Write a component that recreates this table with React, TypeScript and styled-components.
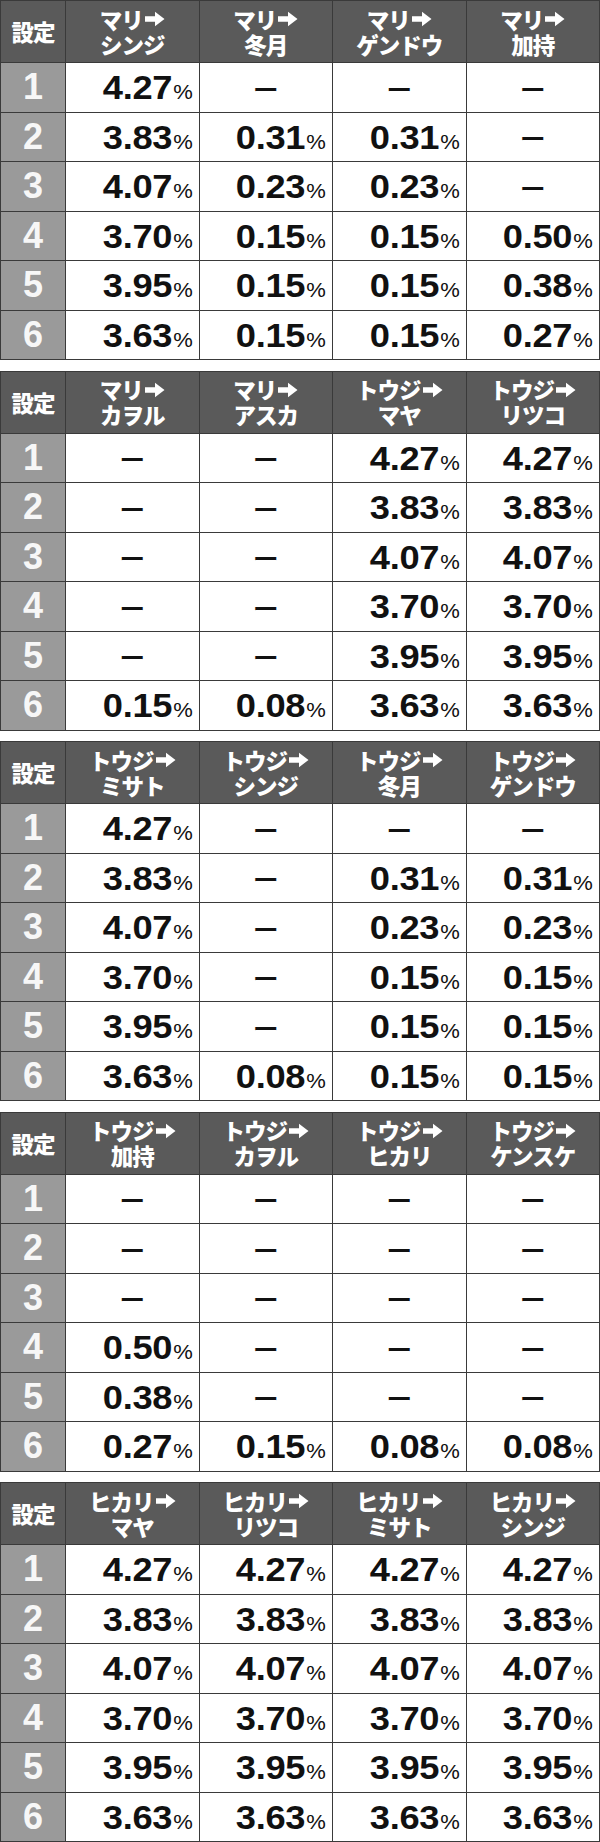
import React from "react";
import styled, { createGlobalStyle } from "styled-components";

const GlobalStyle = createGlobalStyle`
  html, body { margin: 0; padding: 0; background: #ffffff; }
  #root { width: 600px; }
`;

const Page = styled.div`
  width: 600px;
  display: flex;
  flex-direction: column;
  gap: 10.5px;
  background: #ffffff;
`;

const Table = styled.div`
  box-sizing: border-box;
  width: 600px;
  height: 360px;
  display: grid;
  grid-template-columns: 64px repeat(4, 1fr);
  grid-template-rows: 61px repeat(6, 1fr);
  gap: 1px;
  background: #3a3a3a;
  border: 1px solid #3a3a3a;
`;

const HeadCell = styled.div`
  background: #5a5a5a;
  color: #ffffff;
  display: flex;
  flex-direction: column;
  align-items: center;
  justify-content: center;
  font-family: "Noto Sans CJK JP", sans-serif;
  font-weight: 900;
  font-size: 22.5px;
  line-height: 25px;
  letter-spacing: -1px;
  white-space: nowrap;
`;

const HeadLine = styled.div`
  display: flex;
  align-items: center;
  height: 25px;
`;

const ArrowSvg = styled.svg`
  width: 21px;
  height: 16px;
  margin-left: 1px;
  flex: none;
`;

const SetCell = styled.div`
  background: #9a9a9a;
  color: #f7f7f7;
  display: flex;
  align-items: center;
  justify-content: center;
  font-family: "Liberation Sans", Arial, sans-serif;
  font-weight: 700;
  font-size: 36px;
`;

const DataCell = styled.div<{ $dash?: boolean }>`
  background: #ffffff;
  display: flex;
  align-items: center;
  justify-content: ${(p) => (p.$dash ? "center" : "flex-end")};
  padding-right: ${(p) => (p.$dash ? "0" : "6px")};
  color: #111111;
`;

const Value = styled.span`
  display: inline-block;
  transform: scaleX(1.1);
  transform-origin: right center;
  white-space: nowrap;
  font-family: "Liberation Sans", Arial, sans-serif;
  line-height: 1;
  margin-top: 1px;
`;

const Num = styled.span`
  font-weight: 700;
  font-size: 33px;
  letter-spacing: -0.3px;
`;

const Pct = styled.span`
  font-weight: 400;
  font-size: 20px;
  margin-left: 1px;
`;

const DashBar = styled.span`
  font-family: "Noto Sans CJK JP", sans-serif;
  font-weight: 500;
  font-size: 26px;
  line-height: 1;
  margin-top: 3px;
`;

type TableData = {
  heads: [string, string][];
  rows: (string | null)[][];
};

const all = ["4.27", "3.83", "4.07", "3.70", "3.95", "3.63"];

const tables: TableData[] = [
  {
    heads: [
      ["マリ", "シンジ"],
      ["マリ", "冬月"],
      ["マリ", "ゲンドウ"],
      ["マリ", "加持"],
    ],
    rows: [
      ["4.27", null, null, null],
      ["3.83", "0.31", "0.31", null],
      ["4.07", "0.23", "0.23", null],
      ["3.70", "0.15", "0.15", "0.50"],
      ["3.95", "0.15", "0.15", "0.38"],
      ["3.63", "0.15", "0.15", "0.27"],
    ],
  },
  {
    heads: [
      ["マリ", "カヲル"],
      ["マリ", "アスカ"],
      ["トウジ", "マヤ"],
      ["トウジ", "リツコ"],
    ],
    rows: [
      [null, null, "4.27", "4.27"],
      [null, null, "3.83", "3.83"],
      [null, null, "4.07", "4.07"],
      [null, null, "3.70", "3.70"],
      [null, null, "3.95", "3.95"],
      ["0.15", "0.08", "3.63", "3.63"],
    ],
  },
  {
    heads: [
      ["トウジ", "ミサト"],
      ["トウジ", "シンジ"],
      ["トウジ", "冬月"],
      ["トウジ", "ゲンドウ"],
    ],
    rows: [
      ["4.27", null, null, null],
      ["3.83", null, "0.31", "0.31"],
      ["4.07", null, "0.23", "0.23"],
      ["3.70", null, "0.15", "0.15"],
      ["3.95", null, "0.15", "0.15"],
      ["3.63", "0.08", "0.15", "0.15"],
    ],
  },
  {
    heads: [
      ["トウジ", "加持"],
      ["トウジ", "カヲル"],
      ["トウジ", "ヒカリ"],
      ["トウジ", "ケンスケ"],
    ],
    rows: [
      [null, null, null, null],
      [null, null, null, null],
      [null, null, null, null],
      ["0.50", null, null, null],
      ["0.38", null, null, null],
      ["0.27", "0.15", "0.08", "0.08"],
    ],
  },
  {
    heads: [
      ["ヒカリ", "マヤ"],
      ["ヒカリ", "リツコ"],
      ["ヒカリ", "ミサト"],
      ["ヒカリ", "シンジ"],
    ],
    rows: all.map((v) => [v, v, v, v]),
  },
];

function Arrow() {
  return (
    <ArrowSvg viewBox="0 0 21 16" aria-hidden="true">
      <path d="M1 5.2 H11 V0.8 L20.5 8 L11 15.2 V10.8 H1 Z" fill="#ffffff" />
    </ArrowSvg>
  );
}

function RateTable({ data }: { data: TableData }) {
  return (
    <Table>
      <HeadCell>設定</HeadCell>
      {data.heads.map(([from, to], i) => (
        <HeadCell key={`h${i}`}>
          <HeadLine>
            {from}
            <Arrow />
          </HeadLine>
          <HeadLine>{to}</HeadLine>
        </HeadCell>
      ))}
      {data.rows.map((row, r) => (
        <React.Fragment key={`r${r}`}>
          <SetCell>{r + 1}</SetCell>
          {row.map((v, c) =>
            v === null ? (
              <DataCell key={c} $dash>
                <DashBar>ー</DashBar>
              </DataCell>
            ) : (
              <DataCell key={c}>
                <Value>
                  <Num>{v}</Num>
                  <Pct>%</Pct>
                </Value>
              </DataCell>
            )
          )}
        </React.Fragment>
      ))}
    </Table>
  );
}

export default function App() {
  return (
    <>
      <GlobalStyle />
      <Page>
        {tables.map((t, i) => (
          <RateTable key={i} data={t} />
        ))}
      </Page>
    </>
  );
}
